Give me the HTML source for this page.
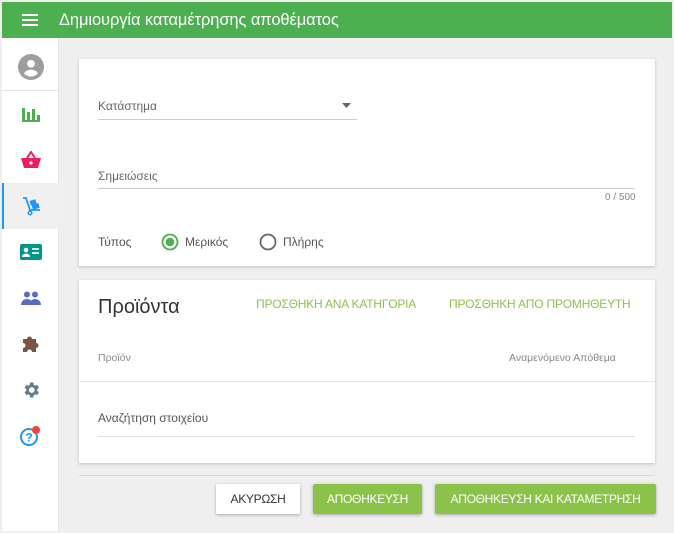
<!DOCTYPE html>
<html><head><meta charset="utf-8"><style>
*{box-sizing:border-box;margin:0;padding:0}
body{width:674px;height:533px;overflow:hidden;background:#efefef;font-family:"Liberation Sans",sans-serif;position:relative}
.hdr{position:absolute;left:2px;top:2px;width:670px;height:36px;background:#4caf50;color:#fff}
.hdr .t{position:absolute;left:57px;top:9px;font-size:16.5px;letter-spacing:-0.1px}
.side{position:absolute;left:2px;top:38px;width:57px;height:493px;background:#fff;border-right:1px solid #e4e4e4}
.ic{position:absolute;left:0;width:57px;height:46px;display:flex;align-items:center;justify-content:center}
.card{position:absolute;left:79px;width:576px;background:#fff;box-shadow:0 1px 3px rgba(0,0,0,.2)}
.lbl{position:absolute;font-size:12px;color:#666}
.line{position:absolute;height:1px;background:#ccc}
.btn{position:absolute;top:484px;height:30px;font-size:12px;display:flex;align-items:center;justify-content:center;box-shadow:0 1px 3px rgba(0,0,0,.3);border-radius:2px;letter-spacing:-0.3px}
.g{background:#8bc34a;color:#fff}
</style></head><body>
<div class="hdr">
<svg style="position:absolute;left:20px;top:12px" width="16" height="12"><rect y="0" width="16" height="2" fill="#fff"/><rect y="5" width="16" height="2" fill="#fff"/><rect y="10" width="16" height="2" fill="#fff"/></svg>
<div class="t">Δημιουργία καταμέτρησης αποθέματος</div></div>
<div class="side">
<div class="ic" style="top:5px;height:48px;border-bottom:1px solid #e4e4e4"><svg width="26" height="26" viewBox="0 0 24 24"><circle cx="12" cy="12" r="12" fill="#9e9e9e"/><circle cx="12" cy="9" r="3.6" fill="#fff"/><path d="M5.5 18c1.5-2.5 4-3.5 6.5-3.5s5 1 6.5 3.5c-1.7 1.8-4 2.8-6.5 2.8s-4.8-1-6.5-2.8z" fill="#fff"/></svg></div>
<div class="ic" style="top:53px"><svg width="18" height="16"><rect x="0" y="2" width="3" height="14" fill="#4caf50"/><rect x="5" y="6" width="3" height="10" fill="#4caf50"/><rect x="10" y="3" width="3" height="13" fill="#4caf50"/><rect x="15" y="9" width="3" height="7" fill="#4caf50"/><rect x="0" y="14" width="18" height="2" fill="#4caf50"/></svg></div>
<div class="ic" style="top:99px"><svg width="20" height="18" viewBox="0 0 20 18"><path d="M6 7L10 1L14 7" stroke="#e91e63" stroke-width="2" fill="none"/><path d="M0 7h20l-3 10H3z" fill="#e91e63"/><circle cx="10" cy="12" r="1.6" fill="#fff"/></svg></div>
<div class="ic" style="top:145px;background:#f0f0f0;border-left:2px solid #2196f3"><svg width="20" height="20" viewBox="0 0 20 20"><path d="M1 2h3l4 12h10" stroke="#2196f3" stroke-width="1.8" fill="none"/><circle cx="8" cy="17" r="1.8" fill="none" stroke="#2196f3" stroke-width="1.5"/><rect x="8" y="4" width="6" height="5" fill="#2196f3" transform="rotate(-15 11 6)"/><rect x="10" y="8" width="7" height="5" fill="#2196f3" transform="rotate(-15 13 10)"/></svg></div>
<div class="ic" style="top:191px"><svg width="22" height="16"><rect width="22" height="16" rx="2" fill="#009688"/><circle cx="6" cy="6" r="2.3" fill="#fff"/><path d="M2 13c0-2.5 2-3.5 4-3.5s4 1 4 3.5z" fill="#fff"/><rect x="12" y="4" width="7" height="2" fill="#fff" opacity=".8"/><rect x="12" y="8" width="7" height="2" fill="#fff" opacity=".8"/></svg></div>
<div class="ic" style="top:237px"><svg width="20" height="14"><circle cx="6" cy="3.5" r="3" fill="#5c6bc0"/><circle cx="14" cy="3.5" r="3" fill="#5c6bc0"/><path d="M0 14c0-4 3-6 6-6s6 2 6 6z" fill="#5c6bc0"/><path d="M9 14c0-4 2-6 5-6s6 2 6 6z" fill="#5c6bc0"/></svg></div>
<div class="ic" style="top:283px"><svg width="18" height="18" viewBox="0 0 18 18"><path d="M1 4h4a2.5 2.5 0 1 1 5 0h4v4a2.5 2.5 0 1 1 0 5v4h-4a2.5 2.5 0 1 0-5 0H1v-4a2.5 2.5 0 1 0 0-5z" fill="#795548"/></svg></div>
<div class="ic" style="top:329px"><svg width="20" height="20" viewBox="0 0 24 24"><path fill="#607d8b" d="M19.4 13a7.5 7.5 0 0 0 0-2l2.1-1.6-2-3.5-2.5 1a7 7 0 0 0-1.7-1L14.9 3h-4l-.4 2.9a7 7 0 0 0-1.7 1l-2.5-1-2 3.5L6.4 11a7.5 7.5 0 0 0 0 2l-2.1 1.6 2 3.5 2.5-1a7 7 0 0 0 1.7 1l.4 2.9h4l.4-2.9a7 7 0 0 0 1.7-1l2.5 1 2-3.5zM12.9 15.5a3.5 3.5 0 1 1 0-7 3.5 3.5 0 0 1 0 7z"/></svg></div>
<div class="ic" style="top:375px"><svg width="24" height="22" viewBox="0 0 24 22"><circle cx="10" cy="12" r="8" fill="none" stroke="#2196f3" stroke-width="2"/><text x="10" y="16.5" font-size="12" font-weight="bold" fill="#2196f3" text-anchor="middle" font-family="Liberation Sans">?</text><circle cx="17" cy="5" r="4" fill="#f44336"/></svg></div>
</div>

<div class="card" style="top:59px;height:207px">
<div class="lbl" style="left:19px;top:40px">Κατάστημα</div>
<svg style="position:absolute;left:263px;top:44px" width="9" height="5"><path d="M0 0h9L4.5 5z" fill="#666"/></svg>
<div class="line" style="left:19px;top:60px;width:259px"></div>
<div class="lbl" style="left:19px;top:110px">Σημειώσεις</div>
<div class="line" style="left:19px;top:129px;width:537px"></div>
<div class="lbl" style="left:526px;top:133px;font-size:10px;color:#888">0 / 500</div>
<div class="lbl" style="left:19px;top:176px;color:#555">Τύπος</div>
<svg style="position:absolute;left:82px;top:174px" width="18" height="18"><circle cx="9" cy="9" r="7.5" fill="none" stroke="#4caf50" stroke-width="1.8"/><circle cx="9" cy="9" r="4.3" fill="#4caf50"/></svg>
<div class="lbl" style="left:106px;top:176px;color:#555">Μερικός</div>
<svg style="position:absolute;left:180px;top:174px" width="18" height="18"><circle cx="9" cy="9" r="7.5" fill="none" stroke="#666" stroke-width="1.8"/></svg>
<div class="lbl" style="left:204px;top:176px;color:#555">Πλήρης</div>
</div>

<div class="card" style="top:280px;height:183px">
<div style="position:absolute;left:19px;top:16px;font-size:20px;color:#333">Προϊόντα</div>
<div class="lbl" style="left:177px;top:17px;color:#8bc34a;letter-spacing:-0.2px">ΠΡΟΣΘΗΚΗ ΑΝΑ ΚΑΤΗΓΟΡΙΑ</div>
<div class="lbl" style="left:370px;top:17px;color:#8bc34a;letter-spacing:-0.2px">ΠΡΟΣΘΗΚΗ ΑΠΟ ΠΡΟΜΗΘΕΥΤΗ</div>
<div class="lbl" style="left:19px;top:72px;font-size:10.5px;color:#888">Προϊόν</div>
<div class="lbl" style="left:430px;top:72px;font-size:10.5px;color:#888">Αναμενόμενο Απόθεμα</div>
<div class="line" style="left:0;top:101px;width:576px;background:#e6e6e6"></div>
<div class="lbl" style="left:19px;top:131px;color:#555">Αναζήτηση στοιχείου</div>
<div class="line" style="left:19px;top:156px;width:537px;background:#e0e0e0"></div>
</div>

<div class="line" style="left:79px;top:475px;width:576px;background:#d8d8d8"></div>
<div class="btn" style="left:216px;width:84px;background:#fff;color:#333">ΑΚΥΡΩΣΗ</div>
<div class="btn g" style="left:313px;width:109px">ΑΠΟΘΗΚΕΥΣΗ</div>
<div class="btn g" style="left:435px;width:221px">ΑΠΟΘΗΚΕΥΣΗ ΚΑΙ ΚΑΤΑΜΕΤΡΗΣΗ</div>
</body></html>
